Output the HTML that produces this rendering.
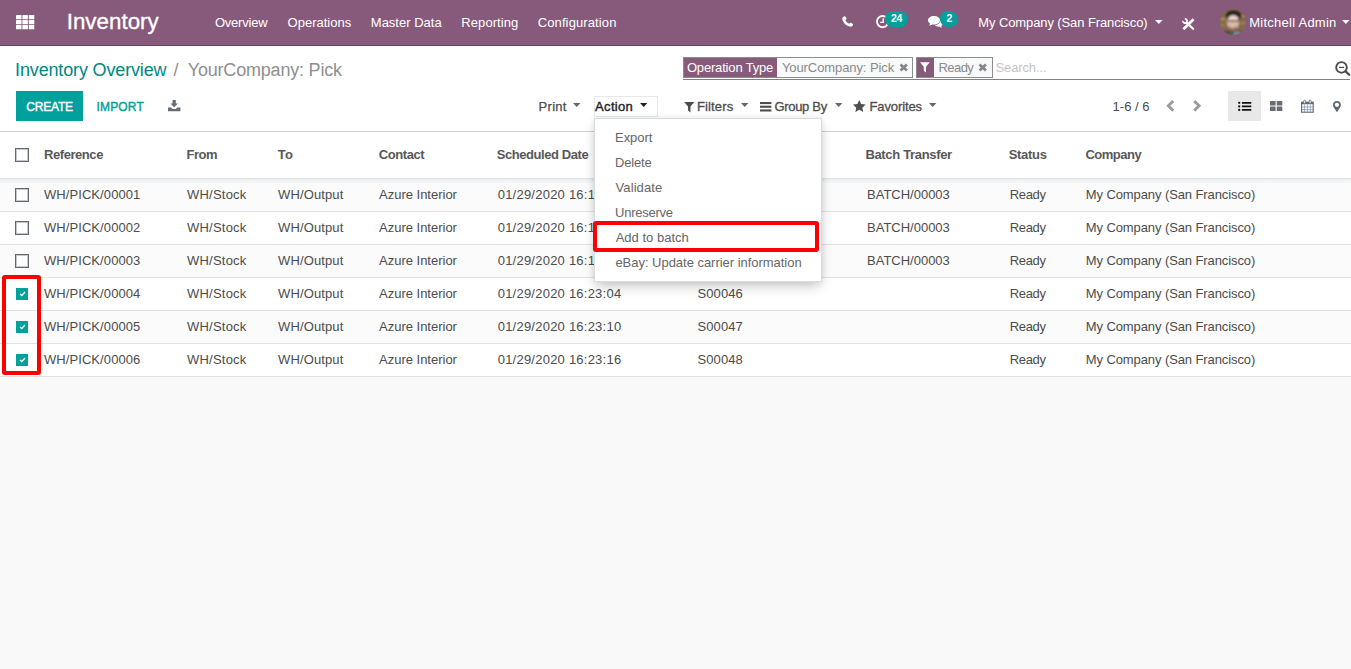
<!DOCTYPE html>
<html lang="en">
<head>
<meta charset="utf-8">
<title>Inventory - YourCompany: Pick</title>
<style>
html,body{margin:0;padding:0;}
body{width:1351px;height:669px;overflow:hidden;background:#f9f9f9;font-family:"Liberation Sans",sans-serif;position:relative;}
.t{position:absolute;white-space:nowrap;line-height:1;}
.abs{position:absolute;}
#nav{position:absolute;left:0;top:0;width:1351px;height:45px;background:#875a7b;border-bottom:1px solid #664562;}
#cp{position:absolute;left:0;top:46px;width:1351px;height:85px;background:#fff;border-bottom:1px solid #cfcfcf;}
#tbl{position:absolute;left:0;top:132px;width:1351px;height:244px;background:#fff;border-bottom:1px solid #dee2e6;}
.row{position:absolute;left:0;width:1351px;height:32px;border-top:1px solid #dee2e6;}
.odd{background:#fbfbfb;}
.cb{position:absolute;left:15px;width:12px;height:12px;border:1px solid #686868;background:#fff;box-shadow:inset 0 0 0 1px #c3c9d0;}
.cbc{position:absolute;left:16px;width:12px;height:12px;background:#00a09d;}
.badge{position:absolute;height:16px;border-radius:8px;background:#00a09d;}
.facet{position:absolute;top:57px;height:19px;border:1px solid #8c8c8c;background:#f8f9fa;}
.facet .lab{position:absolute;left:0;top:0;height:19px;background:#875a7b;}
#dd{position:absolute;left:594px;top:118px;width:226px;height:161.6px;background:#fff;border:1px solid #d9dde2;box-shadow:0 6px 12px -2px rgba(0,0,0,0.22), 0 0 6px rgba(0,0,0,0.08);}
.red{position:absolute;border:4px solid #ff0000;border-radius:3px;box-sizing:border-box;}
svg{position:absolute;overflow:visible;}
</style>
</head>
<body>

<!-- ================= NAVBAR ================= -->
<div id="nav"></div>
<!-- apps grid -->
<svg style="left:15.7px;top:14.8px" width="18.3" height="14.2" viewBox="0 0 18.3 14.2" fill="#fff"><rect x="0" y="0" width="5.5" height="4.2" rx=".5"/><rect x="6.4" y="0" width="5.5" height="4.2" rx=".5"/><rect x="12.8" y="0" width="5.5" height="4.2" rx=".5"/><rect x="0" y="5" width="5.5" height="4.2" rx=".5"/><rect x="6.4" y="5" width="5.5" height="4.2" rx=".5"/><rect x="12.8" y="5" width="5.5" height="4.2" rx=".5"/><rect x="0" y="10" width="5.5" height="4.2" rx=".5"/><rect x="6.4" y="10" width="5.5" height="4.2" rx=".5"/><rect x="12.8" y="10" width="5.5" height="4.2" rx=".5"/></svg>
<!-- phone -->
<svg style="left:841.5px;top:16.3px" width="11.6" height="11" viewBox="0 0 12 11.4" fill="#fff">
<path d="M2.6 0.2 C3.1 0 3.4 0.3 3.7 0.9 L4.6 2.6 C4.8 3.1 4.6 3.4 4.2 3.7 L3.5 4.2 C4.3 5.9 5.6 7.2 7.4 8.1 L8 7.4 C8.3 7 8.7 6.9 9.1 7.1 L10.9 8 C11.5 8.3 11.7 8.6 11.5 9.1 C11.1 10.3 10 11.2 8.9 11.1 C4.3 10.5 0.9 7 0.3 2.9 C0.2 1.7 1.3 0.6 2.6 0.2 Z"/>
</svg>
<!-- clock -->
<svg style="left:875.5px;top:15px" width="13.2" height="13.2" viewBox="0 0 13.2 13.2">
<circle cx="6.6" cy="6.6" r="5.6" fill="none" stroke="#fff" stroke-width="1.9"/>
<path d="M7.2 3.2 V7.4 H4.2" fill="none" stroke="#fff" stroke-width="1.4"/>
</svg>
<div class="badge" style="left:885.4px;top:11px;width:22.6px;"></div>
<!-- comments -->
<svg style="left:928px;top:16.3px" width="15.2" height="11.8" viewBox="0 0 15.2 11.8" fill="#fff">
<path d="M6 0 C9.3 0 12 1.9 12 4.3 C12 6.7 9.3 8.6 6 8.6 C5.4 8.6 4.8 8.5 4.3 8.4 C3.3 9.1 2.2 9.5 1 9.6 C1.6 9 2 8.3 2.1 7.5 C0.8 6.8 0 5.6 0 4.3 C0 1.9 2.7 0 6 0 Z"/>
<path d="M12.3 4.6 C12.3 7 9.9 9 6.9 9.3 C7.9 10.3 9.5 10.9 11.2 10.6 C12 11.2 12.9 11.6 14 11.7 C13.5 11.2 13.2 10.7 13.1 10.1 C14.3 9.5 15.2 8.5 15.2 7.3 C15.2 6 14 4.9 12.3 4.4 Z"/>
</svg>
<div class="badge" style="left:940.4px;top:11px;width:17.6px;"></div>
<!-- caret company -->
<svg style="left:1154.5px;top:20px" width="7.6" height="4" viewBox="0 0 7.6 4" fill="#fff"><path d="M0 0 H7.6 L3.8 4 Z"/></svg>
<!-- debug tools -->
<svg style="left:1181.6px;top:17.7px" width="12.6" height="12.4" viewBox="0 0 12.6 12.4">
<path d="M11.5 1.3 L1.4 11.3" stroke="#fff" stroke-width="2.7" stroke-linecap="butt" fill="none"/>
<path d="M4.6 4.6 L11.1 10.8" stroke="#fff" stroke-width="2.3" stroke-linecap="round" fill="none"/>
<path d="M2.82 0.91 A2.1 2.1 0 1 1 0.91 2.82" stroke="#fff" stroke-width="1.7" fill="none"/>
</svg>
<!-- avatar -->
<svg style="left:1220px;top:9px" width="26" height="26" viewBox="0 0 26 26">
<defs><clipPath id="av"><circle cx="13" cy="13" r="13"/></clipPath>
<filter id="bl" x="-20%" y="-20%" width="140%" height="140%"><feGaussianBlur stdDeviation="0.8"/></filter></defs>
<g clip-path="url(#av)">
<rect width="26" height="26" fill="#84694a"/>
<g filter="url(#bl)">
<rect x="-2" y="-2" width="30" height="30" fill="#84694a"/>
<rect x="0" y="9" width="6" height="2" fill="#a58a66"/><rect x="19" y="6" width="7" height="2" fill="#a58a66"/><rect x="20" y="13" width="6" height="2" fill="#9c7f5c"/><rect x="0" y="15" width="5" height="2" fill="#9c7f5c"/>
<ellipse cx="13" cy="27" rx="13" ry="7" fill="#56514f"/>
<ellipse cx="17" cy="25" rx="4" ry="3" fill="#7a8794"/>
<ellipse cx="13.5" cy="6.5" rx="8" ry="5.5" fill="#2a2422"/>
<ellipse cx="13" cy="13.5" rx="6" ry="7.6" fill="#d9b9a8"/>
<ellipse cx="13.5" cy="9.5" rx="4.6" ry="2.8" fill="#ead6cc"/>
<ellipse cx="12.5" cy="19" rx="4" ry="2.6" fill="#a8745f"/>
<rect x="7.5" y="11.2" width="11.5" height="1.3" fill="#4b3b36"/>
<ellipse cx="12.5" cy="17.3" rx="2.2" ry="0.9" fill="#f1e4dc"/>
</g>
</g>
</svg>
<!-- caret user -->
<svg style="left:1342.4px;top:20px" width="7.6" height="4" viewBox="0 0 7.6 4" fill="#fff"><path d="M0 0 H7.6 L3.8 4 Z"/></svg>

<!-- ================= CONTROL PANEL ================= -->
<div id="cp"></div>
<div class="abs" style="left:16px;top:91px;width:67px;height:30px;background:#00a09d;"></div>
<!-- download -->
<svg style="left:167.5px;top:100px" width="12.4" height="11.2" viewBox="0 0 12.4 11.2" fill="#666b75">
<path d="M4.6 0 H7.8 V3.4 H10 L6.2 7.2 L2.4 3.4 H4.6 Z"/>
<path d="M0 7.6 H3.2 L4.6 9 H7.8 L9.2 7.6 H12.4 V11.2 H0 Z"/>
</svg>
<!-- print caret -->
<svg style="left:573.3px;top:103.4px" width="7.4" height="3.9" viewBox="0 0 7.4 3.9" fill="#666"><path d="M0 0 H7.4 L3.7 3.9 Z"/></svg>
<!-- action box -->
<div class="abs" style="left:594px;top:96px;width:62px;height:18.5px;border:1px solid #e6e9ec;"></div>
<svg style="left:639.5px;top:103.4px" width="7.4" height="3.9" viewBox="0 0 7.4 3.9" fill="#222"><path d="M0 0 H7.4 L3.7 3.9 Z"/></svg>

<!-- search facets -->
<div class="facet" style="left:683px;width:228px;"><div class="lab" style="width:93px;"></div></div>
<div class="facet" style="left:916px;width:75px;"><div class="lab" style="width:16.5px;"></div></div>
<!-- facet x icons -->
<svg style="left:898.8px;top:63.4px" width="9.4" height="8.8" viewBox="0 0 9.4 8.8"><path d="M1.5 1.4 L7.9 7.4 M7.9 1.4 L1.5 7.4" stroke="#868686" stroke-width="2.7" fill="none"/></svg>
<svg style="left:978.4px;top:63.4px" width="9.4" height="8.8" viewBox="0 0 9.4 8.8"><path d="M1.5 1.4 L7.9 7.4 M7.9 1.4 L1.5 7.4" stroke="#868686" stroke-width="2.7" fill="none"/></svg>
<!-- facet funnel -->
<svg style="left:920.4px;top:62.4px" width="9.8" height="10.8" viewBox="0 0 9.6 10" fill="#fff"><path d="M0 0 H9.6 L5.9 4.3 V10 L3.7 8.2 V4.3 Z"/></svg>
<!-- search underline -->
<div class="abs" style="left:683px;top:79px;width:667px;height:1px;background:#828282;"></div>
<!-- search-minus icon -->
<svg style="left:1335px;top:61.2px" width="15.4" height="15.2" viewBox="0 0 15.4 15.2">
<circle cx="6.5" cy="6.4" r="5.3" fill="none" stroke="#4c4c4c" stroke-width="1.9"/>
<path d="M10.6 10.4 L14.2 13.8" stroke="#4c4c4c" stroke-width="2.3" stroke-linecap="round"/>
<path d="M4 6.4 H9" stroke="#4c4c4c" stroke-width="1.2"/>
</svg>

<!-- Filters funnel -->
<svg style="left:683.9px;top:101.6px" width="10.5" height="10.4" viewBox="0 0 10.2 10.4" fill="#4c4c4c"><path d="M0 0 H10.2 L6.3 4.5 V10.4 L3.9 8.5 V4.5 Z"/></svg>
<svg style="left:740.8px;top:103.4px" width="7.4" height="3.9" viewBox="0 0 7.4 3.9" fill="#666"><path d="M0 0 H7.4 L3.7 3.9 Z"/></svg>
<!-- Group by bars -->
<svg style="left:760px;top:102px" width="11.4" height="9.4" viewBox="0 0 11.4 9.4" fill="#4c4c4c"><rect y="0" width="11.4" height="2.1"/><rect y="3.7" width="11.4" height="2.1"/><rect y="7.4" width="11.4" height="2.1"/></svg>
<svg style="left:835px;top:103.4px" width="7.4" height="3.9" viewBox="0 0 7.4 3.9" fill="#666"><path d="M0 0 H7.4 L3.7 3.9 Z"/></svg>
<!-- Favorites star -->
<svg style="left:853.3px;top:99.9px" width="12.6" height="12" viewBox="0 0 12.8 12" fill="#505050"><path d="M6.4 0 L8.3 4 L12.8 4.6 L9.5 7.7 L10.4 12 L6.4 9.9 L2.4 12 L3.3 7.7 L0 4.6 L4.5 4 Z"/></svg>
<svg style="left:929px;top:103.4px" width="7.4" height="3.9" viewBox="0 0 7.4 3.9" fill="#666"><path d="M0 0 H7.4 L3.7 3.9 Z"/></svg>

<!-- pager chevrons -->
<svg style="left:1166px;top:100.2px" width="8.4" height="11.6" viewBox="0 0 8.4 11.6"><path d="M7.2 1 L2.3 5.8 L7.2 10.6" fill="none" stroke="#9a9c9f" stroke-width="2.9"/></svg>
<svg style="left:1193px;top:100.2px" width="8.4" height="11.6" viewBox="0 0 8.4 11.6"><path d="M1.2 1 L6.1 5.8 L1.2 10.6" fill="none" stroke="#9a9c9f" stroke-width="2.9"/></svg>
<!-- view switcher -->
<div class="abs" style="left:1228px;top:91px;width:33px;height:30px;background:#e8e8e8;"></div>
<svg style="left:1238.3px;top:101.9px" width="13.3" height="8.8" viewBox="0 0 13.3 8.8" fill="#111">
<circle cx="1.2" cy="0.85" r="1.15"/><rect x="3.9" y="0" width="9.4" height="1.7" rx=".3"/>
<circle cx="1.2" cy="4.4" r="1.15"/><rect x="3.9" y="3.55" width="9.4" height="1.7" rx=".3"/>
<circle cx="1.2" cy="7.95" r="1.15"/><rect x="3.9" y="7.1" width="9.4" height="1.7" rx=".3"/>
</svg>
<svg style="left:1270.4px;top:101px" width="12.3" height="9.9" viewBox="0 0 12.3 9.9" fill="#676c75">
<rect x="0" y="0" width="5.6" height="4.4" rx=".5"/><rect x="6.7" y="0" width="5.6" height="4.4" rx=".5"/>
<rect x="0" y="5.5" width="5.6" height="4.4" rx=".5"/><rect x="6.7" y="5.5" width="5.6" height="4.4" rx=".5"/>
</svg>
<!-- calendar -->
<svg style="left:1300.8px;top:99.9px" width="12.8" height="12.8" viewBox="0 0 12.8 12.8">
<rect x="0.6" y="2.2" width="11.6" height="10" fill="#fff" stroke="#5f6671" stroke-width="1.1"/>
<rect x="0.6" y="2.2" width="11.6" height="2" fill="#5f6671"/>
<rect x="2.7" y="0.2" width="1.9" height="3.2" rx=".9" fill="#fff" stroke="#5f6671" stroke-width=".8"/><rect x="8.2" y="0.2" width="1.9" height="3.2" rx=".9" fill="#fff" stroke="#5f6671" stroke-width=".8"/>
<path d="M0.6 7 H12.2 M0.6 9.6 H12.2 M3.5 4.4 V12.2 M6.4 4.4 V12.2 M9.3 4.4 V12.2" stroke="#7f8ea8" stroke-width=".7" fill="none"/>
</svg>
<!-- map marker -->
<svg style="left:1332.5px;top:100.7px" width="7.9" height="11.2" viewBox="0 0 7.9 11.2"><path fill-rule="evenodd" fill="#5f6671" d="M3.95 0 C6.2 0 7.9 1.7 7.9 3.9 C7.9 4.9 7.6 5.5 7.2 6.3 L3.95 11.2 L0.7 6.3 C0.3 5.5 0 4.9 0 3.9 C0 1.7 1.7 0 3.95 0 Z M3.95 1.7 A2.15 2.15 0 1 0 3.95 6 A2.15 2.15 0 1 0 3.95 1.7 Z"/></svg>

<!-- ================= TABLE ================= -->
<div id="tbl">
<div class="row odd" style="top:46px"></div>
<div class="abs" style="left:0;top:47px;width:1351px;height:5px;background:linear-gradient(#eceef0,#fbfbfb);"></div>
<div class="row" style="top:79px"></div>
<div class="row odd" style="top:112px"></div>
<div class="row" style="top:145px"></div>
<div class="row odd" style="top:178px"></div>
<div class="row" style="top:211px"></div>
</div>
<div class="cb" style="top:148px"></div>
<div class="cb" style="top:188px"></div>
<div class="cb" style="top:221px"></div>
<div class="cb" style="top:254px"></div>
<div class="cbc" style="top:288px"></div>
<div class="cbc" style="top:321px"></div>
<div class="cbc" style="top:354px"></div>
<svg style="left:18.6px;top:291.4px" width="7" height="5.6" viewBox="0 0 7 5.6"><path d="M1 3 L2.8 4.5 L6 1.1" fill="none" stroke="#fff" stroke-width="1.4"/></svg>
<svg style="left:18.6px;top:324.4px" width="7" height="5.6" viewBox="0 0 7 5.6"><path d="M1 3 L2.8 4.5 L6 1.1" fill="none" stroke="#fff" stroke-width="1.4"/></svg>
<svg style="left:18.6px;top:357.4px" width="7" height="5.6" viewBox="0 0 7 5.6"><path d="M1 3 L2.8 4.5 L6 1.1" fill="none" stroke="#fff" stroke-width="1.4"/></svg>

<!-- ================= TEXT ================= -->
<span class="t" style="left:66.7px;top:11.4px;font-size:22.3px;color:#fff;letter-spacing:0.039px;-webkit-text-stroke:0.35px #fff;">Inventory</span>
<span class="t" style="left:214.9px;top:16.0px;font-size:13px;color:#fff;letter-spacing:-0.204px;">Overview</span>
<span class="t" style="left:287.6px;top:16.0px;font-size:13px;color:#fff;">Operations</span>
<span class="t" style="left:370.8px;top:16.0px;font-size:13px;color:#fff;letter-spacing:0.005px;">Master Data</span>
<span class="t" style="left:461.3px;top:16.0px;font-size:13px;color:#fff;letter-spacing:0.081px;">Reporting</span>
<span class="t" style="left:537.7px;top:16.0px;font-size:13px;color:#fff;letter-spacing:0.118px;">Configuration</span>
<span class="t" style="left:978.3px;top:16.0px;font-size:13px;color:#fff;letter-spacing:-0.105px;">My Company (San Francisco)</span>
<span class="t" style="left:1249.3px;top:16.0px;font-size:13px;color:#fff;letter-spacing:0.246px;">Mitchell Admin</span>
<span class="t" style="left:891.1px;top:13.1px;font-size:10.5px;color:#fff;font-weight:700;letter-spacing:-0.404px;">24</span>
<span class="t" style="left:946.6px;top:13.1px;font-size:10.5px;color:#fff;font-weight:700;">2</span>
<span class="t" style="left:15.1px;top:60.8px;font-size:18px;color:#008784;letter-spacing:-0.154px;">Inventory Overview</span>
<span class="t" style="left:173.4px;top:60.8px;font-size:18px;color:#8f8f8f;">/</span>
<span class="t" style="left:187.8px;top:60.8px;font-size:18px;color:#8f8f8f;letter-spacing:-0.201px;">YourCompany: Pick</span>
<span class="t" style="left:26.2px;top:101.4px;font-size:12px;color:#fff;letter-spacing:-0.184px;-webkit-text-stroke:0.4px #fff;">CREATE</span>
<span class="t" style="left:96.5px;top:101.4px;font-size:12px;color:#00a09d;letter-spacing:0.155px;-webkit-text-stroke:0.4px #00a09d;">IMPORT</span>
<span class="t" style="left:538.6px;top:100.0px;font-size:13px;color:#4c4c4c;letter-spacing:0.269px;-webkit-text-stroke:0.25px #4c4c4c;">Print</span>
<span class="t" style="left:595.1px;top:100.3px;font-size:13px;color:#1f1f1f;letter-spacing:0.318px;-webkit-text-stroke:0.42px #1f1f1f;">Action</span>
<span class="t" style="left:696.9px;top:100.0px;font-size:13px;color:#4c4c4c;letter-spacing:0.153px;-webkit-text-stroke:0.3px #4c4c4c;">Filters</span>
<span class="t" style="left:774.4px;top:100.0px;font-size:13px;color:#4c4c4c;letter-spacing:-0.304px;-webkit-text-stroke:0.3px #4c4c4c;">Group By</span>
<span class="t" style="left:869.5px;top:100.0px;font-size:13px;color:#4c4c4c;letter-spacing:-0.111px;-webkit-text-stroke:0.3px #4c4c4c;">Favorites</span>
<span class="t" style="left:686.9px;top:61.0px;font-size:13px;color:#fff;letter-spacing:-0.169px;">Operation Type</span>
<span class="t" style="left:781.9px;top:61.0px;font-size:13px;color:#8a8a8a;letter-spacing:-0.084px;">YourCompany: Pick</span>
<span class="t" style="left:938.5px;top:61.0px;font-size:13px;color:#8a8a8a;letter-spacing:-0.568px;">Ready</span>
<span class="t" style="left:995.5px;top:61.0px;font-size:13px;color:#c4c4c4;letter-spacing:-0.123px;">Search...</span>
<span class="t" style="left:1112.5px;top:100.0px;font-size:13px;color:#4c4c4c;letter-spacing:0.034px;">1-6 / 6</span>
<span class="t" style="left:44.0px;top:148.0px;font-size:13px;color:#585858;font-weight:700;letter-spacing:-0.438px;">Reference</span>
<span class="t" style="left:186.6px;top:148.0px;font-size:13px;color:#585858;font-weight:700;letter-spacing:-0.546px;">From</span>
<span class="t" style="left:277.8px;top:148.0px;font-size:13px;color:#585858;font-weight:700;letter-spacing:0.118px;">To</span>
<span class="t" style="left:378.8px;top:148.0px;font-size:13px;color:#585858;font-weight:700;letter-spacing:-0.428px;">Contact</span>
<span class="t" style="left:496.8px;top:148.0px;font-size:13px;color:#585858;font-weight:700;letter-spacing:-0.439px;">Scheduled Date</span>
<span class="t" style="left:696.8px;top:148.0px;font-size:13px;color:#585858;font-weight:700;letter-spacing:-0.536px;">Source Document</span>
<span class="t" style="left:865.4px;top:148.0px;font-size:13px;color:#585858;font-weight:700;letter-spacing:-0.330px;">Batch Transfer</span>
<span class="t" style="left:1008.7px;top:148.0px;font-size:13px;color:#585858;font-weight:700;letter-spacing:-0.301px;">Status</span>
<span class="t" style="left:1085.4px;top:148.0px;font-size:13px;color:#585858;font-weight:700;letter-spacing:-0.489px;">Company</span>
<span class="t" style="left:43.9px;top:188.0px;font-size:13px;color:#4c4c4c;letter-spacing:0.087px;">WH/PICK/00001</span>
<span class="t" style="left:187.0px;top:188.0px;font-size:13px;color:#4c4c4c;letter-spacing:0.217px;">WH/Stock</span>
<span class="t" style="left:278.0px;top:188.0px;font-size:13px;color:#4c4c4c;letter-spacing:0.125px;">WH/Output</span>
<span class="t" style="left:379.0px;top:188.0px;font-size:13px;color:#4c4c4c;letter-spacing:-0.007px;">Azure Interior</span>
<span class="t" style="left:497.7px;top:188.0px;font-size:13px;color:#4c4c4c;letter-spacing:0.230px;">01/29/2020 16:12:09</span>
<span class="t" style="left:697.4px;top:188.0px;font-size:13px;color:#4c4c4c;letter-spacing:0.127px;">S00043</span>
<span class="t" style="left:867.1px;top:188.0px;font-size:13px;color:#4c4c4c;letter-spacing:-0.013px;">BATCH/00003</span>
<span class="t" style="left:1009.8px;top:188.0px;font-size:13px;color:#4c4c4c;letter-spacing:-0.368px;">Ready</span>
<span class="t" style="left:1085.8px;top:188.0px;font-size:13px;color:#4c4c4c;letter-spacing:-0.097px;">My Company (San Francisco)</span>
<span class="t" style="left:43.9px;top:221.0px;font-size:13px;color:#4c4c4c;letter-spacing:0.087px;">WH/PICK/00002</span>
<span class="t" style="left:187.0px;top:221.0px;font-size:13px;color:#4c4c4c;letter-spacing:0.217px;">WH/Stock</span>
<span class="t" style="left:278.0px;top:221.0px;font-size:13px;color:#4c4c4c;letter-spacing:0.125px;">WH/Output</span>
<span class="t" style="left:379.0px;top:221.0px;font-size:13px;color:#4c4c4c;letter-spacing:-0.007px;">Azure Interior</span>
<span class="t" style="left:497.7px;top:221.0px;font-size:13px;color:#4c4c4c;letter-spacing:0.230px;">01/29/2020 16:12:09</span>
<span class="t" style="left:697.4px;top:221.0px;font-size:13px;color:#4c4c4c;letter-spacing:0.127px;">S00044</span>
<span class="t" style="left:867.1px;top:221.0px;font-size:13px;color:#4c4c4c;letter-spacing:-0.013px;">BATCH/00003</span>
<span class="t" style="left:1009.8px;top:221.0px;font-size:13px;color:#4c4c4c;letter-spacing:-0.368px;">Ready</span>
<span class="t" style="left:1085.8px;top:221.0px;font-size:13px;color:#4c4c4c;letter-spacing:-0.097px;">My Company (San Francisco)</span>
<span class="t" style="left:43.9px;top:254.0px;font-size:13px;color:#4c4c4c;letter-spacing:0.087px;">WH/PICK/00003</span>
<span class="t" style="left:187.0px;top:254.0px;font-size:13px;color:#4c4c4c;letter-spacing:0.217px;">WH/Stock</span>
<span class="t" style="left:278.0px;top:254.0px;font-size:13px;color:#4c4c4c;letter-spacing:0.125px;">WH/Output</span>
<span class="t" style="left:379.0px;top:254.0px;font-size:13px;color:#4c4c4c;letter-spacing:-0.007px;">Azure Interior</span>
<span class="t" style="left:497.7px;top:254.0px;font-size:13px;color:#4c4c4c;letter-spacing:0.230px;">01/29/2020 16:12:11</span>
<span class="t" style="left:697.4px;top:254.0px;font-size:13px;color:#4c4c4c;letter-spacing:0.127px;">S00045</span>
<span class="t" style="left:867.1px;top:254.0px;font-size:13px;color:#4c4c4c;letter-spacing:-0.013px;">BATCH/00003</span>
<span class="t" style="left:1009.8px;top:254.0px;font-size:13px;color:#4c4c4c;letter-spacing:-0.368px;">Ready</span>
<span class="t" style="left:1085.8px;top:254.0px;font-size:13px;color:#4c4c4c;letter-spacing:-0.097px;">My Company (San Francisco)</span>
<span class="t" style="left:43.9px;top:287.0px;font-size:13px;color:#4c4c4c;letter-spacing:0.087px;">WH/PICK/00004</span>
<span class="t" style="left:187.0px;top:287.0px;font-size:13px;color:#4c4c4c;letter-spacing:0.217px;">WH/Stock</span>
<span class="t" style="left:278.0px;top:287.0px;font-size:13px;color:#4c4c4c;letter-spacing:0.125px;">WH/Output</span>
<span class="t" style="left:379.0px;top:287.0px;font-size:13px;color:#4c4c4c;letter-spacing:-0.007px;">Azure Interior</span>
<span class="t" style="left:497.7px;top:287.0px;font-size:13px;color:#4c4c4c;letter-spacing:0.230px;">01/29/2020 16:23:04</span>
<span class="t" style="left:697.4px;top:287.0px;font-size:13px;color:#4c4c4c;letter-spacing:0.127px;">S00046</span>
<span class="t" style="left:1009.8px;top:287.0px;font-size:13px;color:#4c4c4c;letter-spacing:-0.368px;">Ready</span>
<span class="t" style="left:1085.8px;top:287.0px;font-size:13px;color:#4c4c4c;letter-spacing:-0.097px;">My Company (San Francisco)</span>
<span class="t" style="left:43.9px;top:320.0px;font-size:13px;color:#4c4c4c;letter-spacing:0.087px;">WH/PICK/00005</span>
<span class="t" style="left:187.0px;top:320.0px;font-size:13px;color:#4c4c4c;letter-spacing:0.217px;">WH/Stock</span>
<span class="t" style="left:278.0px;top:320.0px;font-size:13px;color:#4c4c4c;letter-spacing:0.125px;">WH/Output</span>
<span class="t" style="left:379.0px;top:320.0px;font-size:13px;color:#4c4c4c;letter-spacing:-0.007px;">Azure Interior</span>
<span class="t" style="left:497.7px;top:320.0px;font-size:13px;color:#4c4c4c;letter-spacing:0.230px;">01/29/2020 16:23:10</span>
<span class="t" style="left:697.4px;top:320.0px;font-size:13px;color:#4c4c4c;letter-spacing:0.127px;">S00047</span>
<span class="t" style="left:1009.8px;top:320.0px;font-size:13px;color:#4c4c4c;letter-spacing:-0.368px;">Ready</span>
<span class="t" style="left:1085.8px;top:320.0px;font-size:13px;color:#4c4c4c;letter-spacing:-0.097px;">My Company (San Francisco)</span>
<span class="t" style="left:43.9px;top:353.0px;font-size:13px;color:#4c4c4c;letter-spacing:0.087px;">WH/PICK/00006</span>
<span class="t" style="left:187.0px;top:353.0px;font-size:13px;color:#4c4c4c;letter-spacing:0.217px;">WH/Stock</span>
<span class="t" style="left:278.0px;top:353.0px;font-size:13px;color:#4c4c4c;letter-spacing:0.125px;">WH/Output</span>
<span class="t" style="left:379.0px;top:353.0px;font-size:13px;color:#4c4c4c;letter-spacing:-0.007px;">Azure Interior</span>
<span class="t" style="left:497.7px;top:353.0px;font-size:13px;color:#4c4c4c;letter-spacing:0.230px;">01/29/2020 16:23:16</span>
<span class="t" style="left:697.4px;top:353.0px;font-size:13px;color:#4c4c4c;letter-spacing:0.127px;">S00048</span>
<span class="t" style="left:1009.8px;top:353.0px;font-size:13px;color:#4c4c4c;letter-spacing:-0.368px;">Ready</span>
<span class="t" style="left:1085.8px;top:353.0px;font-size:13px;color:#4c4c4c;letter-spacing:-0.097px;">My Company (San Francisco)</span>

<!-- ================= ACTION DROPDOWN ================= -->
<div id="dd"></div>
<span class="t" style="left:615.1px;top:131.0px;font-size:13px;color:#666;letter-spacing:-0.076px;">Export</span>
<span class="t" style="left:615.1px;top:156.0px;font-size:13px;color:#666;letter-spacing:-0.189px;">Delete</span>
<span class="t" style="left:615.6px;top:181.0px;font-size:13px;color:#666;letter-spacing:0.072px;">Validate</span>
<span class="t" style="left:615.1px;top:206.0px;font-size:13px;color:#666;letter-spacing:-0.268px;">Unreserve</span>
<span class="t" style="left:615.7px;top:230.7px;font-size:13px;color:#666;letter-spacing:0.005px;">Add to batch</span>
<span class="t" style="left:615.4px;top:255.7px;font-size:13px;color:#666;letter-spacing:-0.028px;">eBay: Update carrier information</span>

<!-- ================= RED ANNOTATIONS ================= -->
<div class="red" style="left:2px;top:275px;width:39px;height:100px;"></div>
<div class="red" style="left:593px;top:221px;width:226px;height:31px;"></div>

</body>
</html>
